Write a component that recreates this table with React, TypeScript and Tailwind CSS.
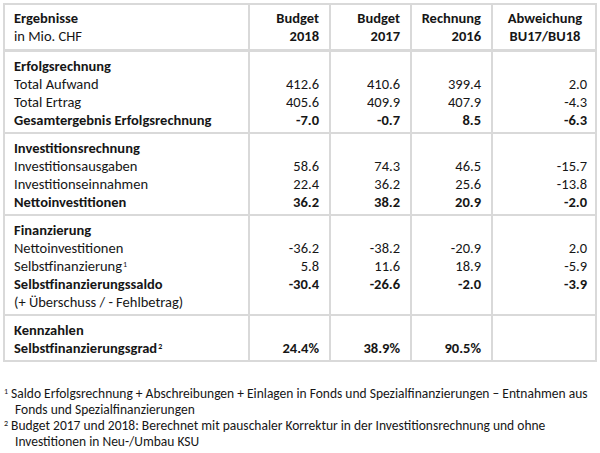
const sections = [
  {
    title: 'Erfolgsrechnung',
    rows: [
      { label: 'Total Aufwand', v: ['412.6', '410.6', '399.4', '2.0'] },
      { label: 'Total Ertrag', v: ['405.6', '409.9', '407.9', '-4.3'] },
      { label: 'Gesamtergebnis Erfolgsrechnung', v: ['-7.0', '-0.7', '8.5', '-6.3'], bold: true },
    ],
  },
  {
    title: 'Investitionsrechnung',
    rows: [
      { label: 'Investitionsausgaben', v: ['58.6', '74.3', '46.5', '-15.7'] },
      { label: 'Investitionseinnahmen', v: ['22.4', '36.2', '25.6', '-13.8'] },
      { label: 'Nettoinvestitionen', v: ['36.2', '38.2', '20.9', '-2.0'], bold: true },
    ],
  },
  {
    title: 'Finanzierung',
    rows: [
      { label: 'Nettoinvestitionen', v: ['-36.2', '-38.2', '-20.9', '2.0'] },
      { label: 'Selbstfinanzierung', sup: '1', v: ['5.8', '11.6', '18.9', '-5.9'] },
      { label: 'Selbstfinanzierungssaldo', v: ['-30.4', '-26.6', '-2.0', '-3.9'], bold: true },
      { label: '(+ Überschuss / - Fehlbetrag)', v: ['', '', '', ''] },
    ],
  },
  {
    title: 'Kennzahlen',
    rows: [
      { label: 'Selbstfinanzierungsgrad', sup: '2', v: ['24.4%', '38.9%', '90.5%', ''], bold: true },
    ],
  },
];

type Row = { label: string; v: string[]; bold?: boolean; sup?: string };

const cell = 'border-2 border-[#d9d9d9] align-top pt-[5px] pb-[3px]';

function Line({ children, bold }: { children?: React.ReactNode; bold?: boolean }) {
  return <div className={`h-[18px] leading-[18px] whitespace-nowrap ${bold ? 'font-bold' : ''}`}>{children}</div>;
}

export default function App() {
  return (
    <div className="w-[600px] h-[453px] bg-white text-[#161616] text-[14.5px] pl-[3px] pt-[3px]" style={{ fontFamily: 'Carlito, Lato, "Liberation Sans", sans-serif' }}>
      <table className="table-fixed border-collapse w-[594px]">
        <colgroup>
          <col className="w-[245px]" />
          <col className="w-[81px]" />
          <col className="w-[81px]" />
          <col className="w-[81px]" />
          <col className="w-[104px]" />
        </colgroup>
        <thead>
          <tr>
            <th className="border-2 border-b-[3px] border-[#d9d9d9] text-left font-normal pl-[9px] pt-[4px] pb-[4px] align-top">
              <Line bold>Ergebnisse</Line>
              <Line>in Mio. CHF</Line>
            </th>
            {[
              ['Budget', '2018'],
              ['Budget', '2017'],
              ['Rechnung', '2016'],
            ].map(([a, b]) => (
              <th key={b} className="border-2 border-b-[3px] border-[#d9d9d9] text-right pr-[10px] pt-[4px] pb-[4px] align-top">
                <Line bold>{a}</Line>
                <Line bold>{b}</Line>
              </th>
            ))}
            <th className="border-2 border-b-[3px] border-[#d9d9d9] text-center pl-[2px] pt-[4px] pb-[4px] align-top">
              <Line bold>Abweichung</Line>
              <Line bold>BU17/BU18</Line>
            </th>
          </tr>
        </thead>
        <tbody>
          {sections.map((s) => (
            <tr key={s.title}>
              <td className={`${cell} pl-[9px]`}>
                <Line bold>{s.title}</Line>
                {(s.rows as Row[]).map((r) => (
                  <Line key={r.label} bold={r.bold}>
                    {r.label}
                    {r.sup && <sup className="text-[8px] ml-[1px]">{r.sup}</sup>}
                  </Line>
                ))}
              </td>
              {[0, 1, 2, 3].map((i) => (
                <td key={i} className={`${cell} text-right ${i === 3 ? 'pr-[8px]' : 'pr-[10px]'}`}>
                  <Line />
                  {(s.rows as Row[]).map((r) => (
                    <Line key={r.label} bold={r.bold}>
                      {r.v[i]}
                    </Line>
                  ))}
                </td>
              ))}
            </tr>
          ))}
        </tbody>
      </table>

      <div className="mt-[24px] text-[13.5px] leading-[16px] w-[594px]">
        <p className="pl-[12px] -indent-[11px]">
          <sup className="text-[8px] mr-[3px]">1</sup>Saldo Erfolgsrechnung + Abschreibungen + Einlagen in Fonds und Spezialfinanzierungen – Entnahmen aus Fonds und Spezialfinanzierungen
        </p>
        <p className="pl-[12px] -indent-[11px]">
          <sup className="text-[8px] mr-[3px]">2</sup>Budget 2017 und 2018: Berechnet mit pauschaler Korrektur in der Investitionsrechnung und ohne Investitionen in Neu-/Umbau KSU
        </p>
      </div>
    </div>
  );
}
